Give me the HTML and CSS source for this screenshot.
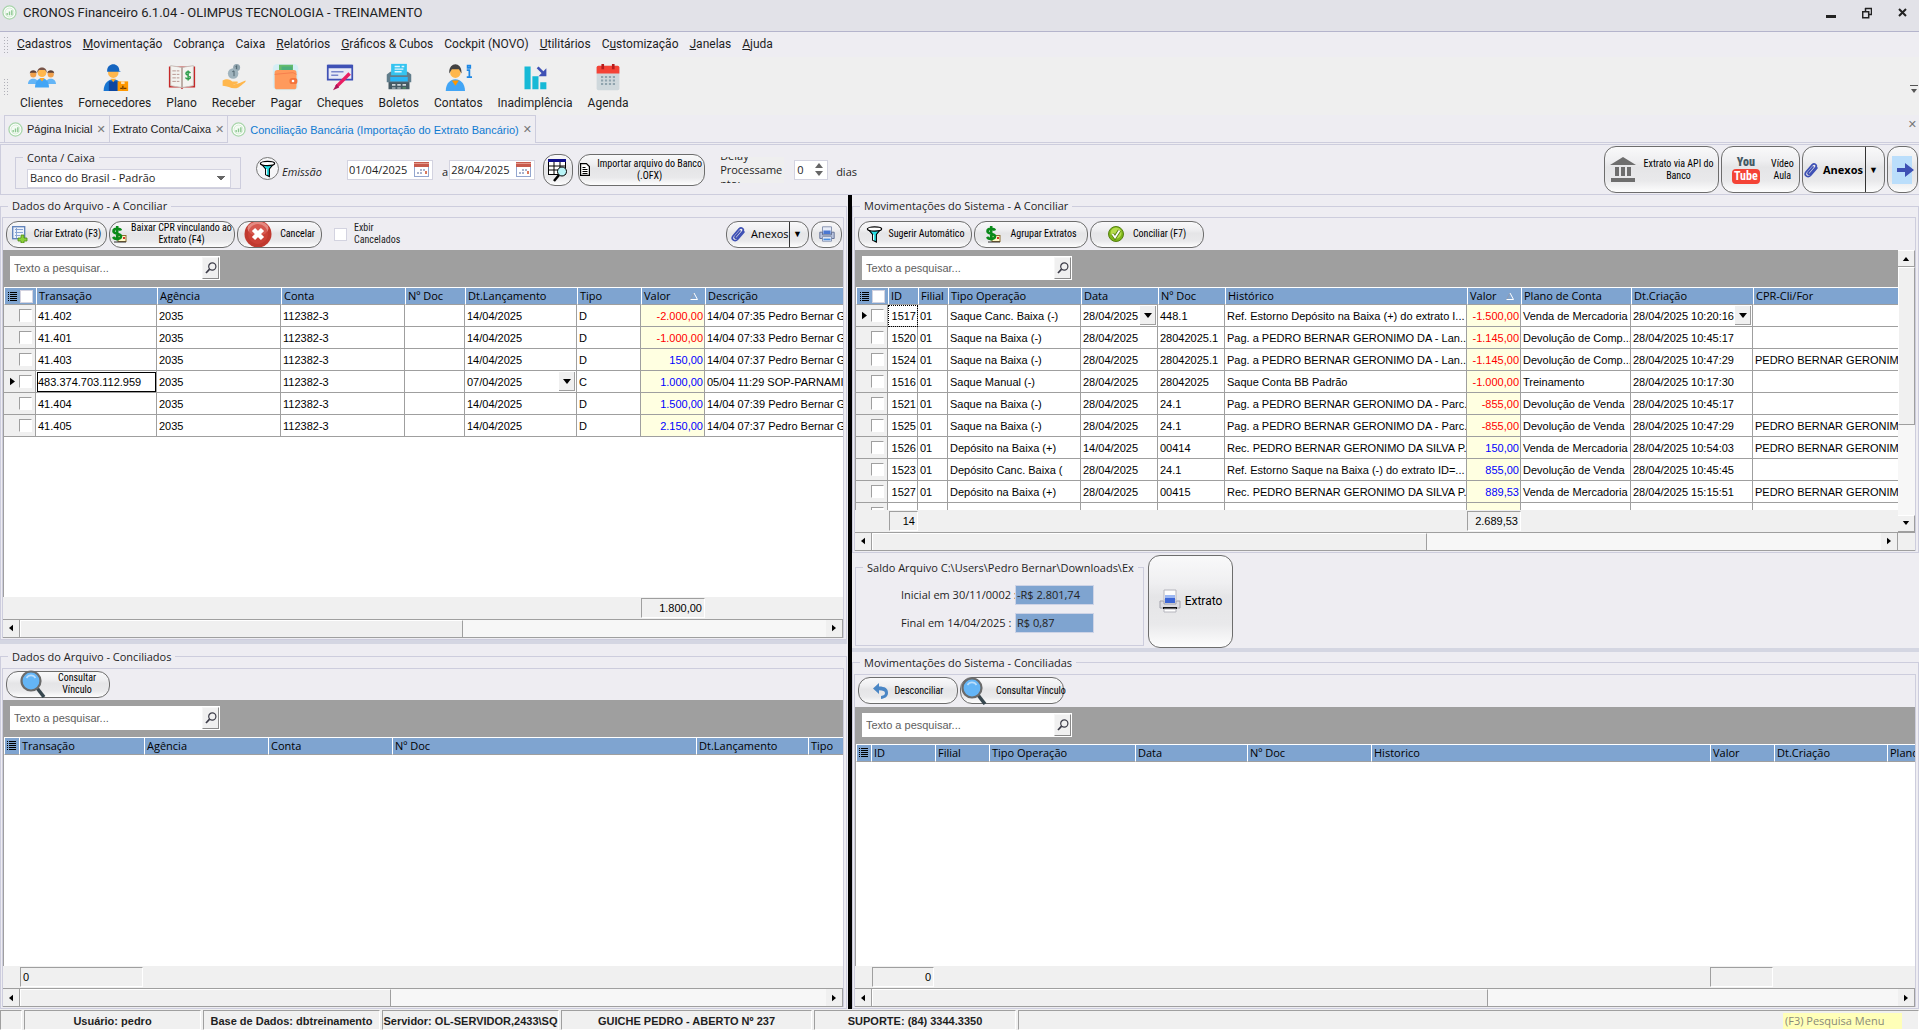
FILE: index.html
```html
<!DOCTYPE html>
<html lang="pt-BR">
<head>
    <meta charset="UTF-8">
    <meta name="viewport" content="width=device-width, initial-scale=1.0">
    <title>CRONOS Financeiro 6.1.04 - OLIMPUS TECNOLOGIA - TREINAMENTO</title>
    <link rel="stylesheet" href="styles.css">
</head>
<body>

    <!-- símbolos reutilizados -->
    <svg class="symbols" aria-hidden="true">
        <symbol id="i-logo" viewBox="0 0 16 16"><circle cx="8" cy="8" r="7" fill="#fff" stroke="#a9d6ab" stroke-width="1.4"/><circle cx="8" cy="8" r="4.8" fill="#f4fbf4" stroke="#c9e6ca" stroke-width=".8"/><path d="M5.500 11V8.500M8 11V7M10.500 11V5.500" stroke="#8cc790" stroke-width="1.500"/></symbol>
        <symbol id="i-cal" viewBox="0 0 15 15"><rect x=".5" y=".5" width="14" height="14" fill="#fff" stroke="#93a6cf"/><rect width="15" height="5" fill="#c75a4c"/><rect y="1" width="15" height="1" fill="#e39a8e"/><path d="M6 7h2v2H6zM9 7h2v2H9zM3 10h2v2H3zM6 10h2v2H6z" fill="#a9b3cd"/><path d="M11 9h2v3h-2z" fill="#d9795e"/></symbol>
        <symbol id="i-lupa" viewBox="0 0 12 12"><circle cx="7.300" cy="4.500" r="3.600" fill="none" stroke="#3c3c48" stroke-width="1.200"/><path d="M4.600 7.200L1 11" stroke="#3c3c48" stroke-width="1.700"/></symbol>
        <symbol id="i-lupa-azul" viewBox="0 0 26 28"><path d="M17 18l7 9" stroke="#37474f" stroke-width="3.500"/><circle cx="11" cy="11" r="9.500" fill="#64b5f6" stroke="#6b6b6b" stroke-width="2.200"/><path d="M6.500 8c2-3.500 7-3.500 9 0" fill="none" stroke="#bbdefb" stroke-width="1.600"/></symbol>
        <symbol id="i-funil" viewBox="0 0 18 18"><path d="M2 3l5 6v6l4 2V9l5-6z" fill="#27e0e6" stroke="#000" stroke-width="1.200"/><ellipse cx="9" cy="3.200" rx="7.500" ry="2.200" fill="#fff" stroke="#000" stroke-width="1.300"/><path d="M8 9v6" stroke="#fff"/></symbol>
        <symbol id="i-cifra" viewBox="0 0 16 17"><rect x="7" y="9.500" width="8" height="6" fill="#fff9c8" stroke="#8a6d2f"/><path d="M10 4.500C9 2.500 2.500 2 2.500 5.300c0 3.200 7.500 1.500 7.500 5 0 3.400-6.500 3.200-8 .7M6.200 0v14.500" fill="none" stroke="#0a8a1a" stroke-width="2.600"/><path d="M3 16h12" stroke="#333"/><path d="M12 11h2v2h-2z" fill="#d0342c"/></symbol>
        <symbol id="i-clipe" viewBox="0 0 16 16"><path d="M14 6l-6.500 7.500c-2.400 2.500-6.800.2-4.700-3.300l6.500-7.500c2-2 5.200.2 3.500 2.700L7 12c-1.100 1.100-2.700-.2-1.800-1.400L10 5" fill="none" stroke="#3f51b5" stroke-width="1.700" stroke-linecap="round"/></symbol>
        <symbol id="i-impressora" viewBox="0 0 20 20"><path d="M5 2h10v8H5z" fill="#e8edf8" stroke="#7f8cab"/><path d="M2 8h3v3h10V8h3v7H2z" fill="#b9c4de" stroke="#5d6c92"/><path d="M6 6h8v4H6z" fill="#4b78d2"/><path d="M5 13h10v5H5z" fill="#f4f7ff" stroke="#7f8cab"/><path d="M6 16h8" stroke="#4b8fe0" stroke-width="2"/></symbol>
        <symbol id="i-lista" viewBox="0 0 9 9"><path d="M0 .5h1M2 .5h7M0 2.500h1M2 2.500h7M0 4.500h1M2 4.500h7M0 6.500h1M2 6.500h7M0 8.500h1M2 8.500h7" stroke="#000"/></symbol>
        <symbol id="i-ordem" viewBox="0 0 8 8"><path d="M.5 7.500L4 1" stroke="#8f9bb0" fill="none"/><path d="M4 1l3.500 6.500h-7" stroke="#fff" fill="none"/></symbol>
        <symbol id="i-ponta" viewBox="0 0 6 9"><path d="M0 0l6 4.500L0 9z"/></symbol>
        <symbol id="i-esq" viewBox="0 0 5 8"><path d="M5 0L0 4l5 4z"/></symbol>
        <symbol id="i-dir" viewBox="0 0 5 8"><path d="M0 0l5 4-5 4z"/></symbol>
        <symbol id="i-cima" viewBox="0 0 8 5"><path d="M0 5l4-5 4 5z"/></symbol>
        <symbol id="i-baixo" viewBox="0 0 8 5"><path d="M0 0l4 5 4-5z"/></symbol>
    </svg>

    <!-- barra de título -->
    <header class="titlebar">
        <svg class="logo"><use href="#i-logo"/></svg>
        <h1>CRONOS Financeiro 6.1.04 - OLIMPUS TECNOLOGIA - TREINAMENTO</h1>
        <div class="window-buttons">
            <button aria-label="Minimizar"><svg width="10" height="12"><path d="M0 8h10v3H0z" fill="#222"/></svg></button>
            <button aria-label="Restaurar"><svg width="10" height="12"><path d="M3 1.500h6.500v6H7M3.500 1v3" fill="none" stroke="#222" stroke-width="1.500"/><path d="M.7 4.700h6v6h-6z" fill="none" stroke="#222" stroke-width="1.500"/></svg></button>
            <button aria-label="Fechar"><svg width="10" height="12"><path d="M1 2l7 7M8 2L1 9" stroke="#222" stroke-width="2"/></svg></button>
        </div>
    </header>

    <nav class="menubar">
        <span class="grip"></span>
        <a href="#"><u>C</u>adastros</a>
        <a href="#"><u>M</u>ovimentação</a>
        <a href="#">Cobrança</a>
        <a href="#">Caixa</a>
        <a href="#"><u>R</u>elatórios</a>
        <a href="#"><u>G</u>ráficos &amp; Cubos</a>
        <a href="#">Cockpit (NOVO)</a>
        <a href="#"><u>U</u>tilitários</a>
        <a href="#">C<u>u</u>stomização</a>
        <a href="#"><u>J</u>anelas</a>
        <a href="#"><u>A</u>juda</a>
    </nav>

    <div class="toolbar">
        <span class="grip"></span>
        <button>
            <svg viewBox="0 0 32 32"><circle cx="6" cy="13" r="3.500" fill="#f0a04b"/><path d="M2 12c0-5 8-5 8 0l-1-1H3z" fill="#5d4037"/><circle cx="26" cy="13" r="3.500" fill="#f0a04b"/><path d="M22 12c0-5 8-5 8 0l-1-1h-6z" fill="#5d4037"/><path d="M0 24c0-8 12-8 12 0zM20 24c0-8 12-8 12 0z" fill="#64b5f6"/><circle cx="16" cy="11" r="5" fill="#ffb74d"/><path d="M10.500 11c0-8 11-8 11 0l-2-3h-7z" fill="#795548"/><path d="M8 28c0-14 16-14 16 0z" fill="#42a5f5"/><path d="M13 17h6l-3 4z" fill="#ffa726"/></svg>
            <span>Clientes</span>
        </button>
        <button>
            <svg viewBox="0 0 32 32"><circle cx="14" cy="11" r="6" fill="#ffb74d"/><path d="M7 9c0-10 14-10 14 0l2 1H7z" fill="#1565c0"/><path d="M3 32c0-18 22-18 22 0z" fill="#1976d2"/><path d="M9 21h10v11H9z" fill="#0d47a1"/><path d="M11 18h6l-3 4z" fill="#ffa726"/><path d="M19 21h12v11H19z" fill="#ff9800"/><path d="M23 21h4v3h-4z" fill="#ffe0b2"/><path d="M22 29h2M26 29h3M25 26v4" stroke="#6d3b00" stroke-width="1.500"/></svg>
            <span>Fornecedores</span>
        </button>
        <button>
            <svg viewBox="0 0 32 32"><path d="M1 4h30v24H18l-2 2-2-2H1z" fill="#c62828"/><path d="M3 3l13 2v23L3 26zM29 3L16 5v23l13-2z" fill="#f3f3f0" stroke="#c5beb8"/><path d="M16 5v23" stroke="#a1887f"/><path d="M5 9h8M5 13h8M5 17h8M5 21h8" stroke="#b08a85" stroke-dasharray="4 1"/><path d="M25.500 11.500c-1-2-5-2-5 .5s5 1.800 5 4.300-4.500 2.500-5.500.2M23 8.500v11.500" fill="none" stroke="#2e9e4b" stroke-width="1.700"/></svg>
            <span>Plano</span>
        </button>
        <button>
            <svg viewBox="0 0 32 32"><circle cx="19" cy="5" r="4" fill="#90a4ae"/><circle cx="15" cy="12" r="6" fill="#9fb3bd"/><path d="M14 10l2-1v6M18 4l1-1v4" fill="none" stroke="#455a64"/><path d="M3 20c5-3 9-1 11 1h6c1 2-1 3-5 3 4 1 9-2 14-4 2 1-4 5-8 8-7 3-11-2-18-2z" fill="#ffb74d"/></svg>
            <span>Receber</span>
        </button>
        <button>
            <svg viewBox="0 0 32 32"><rect x="1" y="1" width="29" height="30" rx="5" fill="#d5eef5"/><path d="M8 2h16v11H8z" fill="#66bb6a"/><path d="M11 4h12v7H11z" fill="#4caf7a"/><rect x="3" y="8" width="25" height="22" rx="3" fill="#ff9a5c"/><path d="M3 13l21-2 4 2" stroke="#f57c4b" fill="none"/><rect x="20" y="17" width="9" height="7" rx="3" fill="#f4743b"/><circle cx="24" cy="20.500" r="1.500" fill="#fff"/></svg>
            <span>Pagar</span>
        </button>
        <button>
            <svg viewBox="0 0 32 32"><rect x="2" y="3" width="28" height="16" fill="#e8eaf6" stroke="#3f51b5" stroke-width="2"/><path d="M2 4h28" stroke="#3f51b5" stroke-width="4"/><path d="M6 10h14M6 14h8" stroke="#7986cb" stroke-width="1.500"/><path d="M27 12L12 27" stroke="#e91e63" stroke-width="4"/><path d="M12 24l3 4-7 3z" fill="#ad1457"/></svg>
            <span>Cheques</span>
        </button>
        <button>
            <svg viewBox="0 0 32 32"><path d="M4 14h24v16H4z" fill="#455a64"/><path d="M2 13l4-3h20l4 3v9H2z" fill="#607d8b"/><path d="M7 1h18v13H7z" fill="#35c4f0"/><path d="M11 4h6M11 7h10M11 10h8M19 4h3" stroke="#e1f5fe" stroke-width="1.500"/><path d="M6 16h20v5H6z" fill="#29b6f6"/><path d="M8 24h4v2H8zM14 24h4v2h-4zM20 24h4v2h-4zM8 28h4v1H8zM14 28h4v1h-4z" fill="#cfd8dc"/><path d="M20 28h4v1h-4z" fill="#66bb6a"/></svg>
            <span>Boletos</span>
        </button>
        <button>
            <svg viewBox="0 0 32 32"><circle cx="13" cy="11" r="6" fill="#ffb74d"/><path d="M6 12c-1-14 15-14 14 0l-3-5H9z" fill="#424242"/><path d="M2 32c0-18 22-18 22 0z" fill="#42a5f5"/><path d="M9 20h8l-4 6z" fill="#ff9800"/><path d="M27 3h3v2.500h-3zM26 8h3v8M26 16h6" fill="none" stroke="#1e88e5" stroke-width="2"/></svg>
            <span>Contatos</span>
        </button>
        <button>
            <svg viewBox="0 0 32 32"><path d="M4 4h7v26H4zM13 15h7v15h-7zM22 22h7v8h-7z" fill="#16b9d6"/><path d="M19 5l8 8" stroke="#3f51b5" stroke-width="3"/><path d="M29 6v9h-9z" fill="#3f51b5"/></svg>
            <span>Inadimplência</span>
        </button>
        <button>
            <svg viewBox="0 0 32 32"><rect x="3" y="3" width="26" height="28" rx="2" fill="#cfd8dc"/><path d="M3 12V5q0-2 2-2h22q2 0 2 2v7z" fill="#f44336"/><path d="M10 1v6M22 1v6" stroke="#b71c1c" stroke-width="3"/><path d="M8 16h16M8 20h16M8 24h16" stroke="#90a4ae" stroke-width="2.500" stroke-dasharray="2.500 2"/></svg>
            <span>Agenda</span>
        </button>
        <svg class="overflow" width="8" height="10"><path d="M0 .5h8" stroke="#555"/><path d="M1 4l3 4 3-4z" fill="#555"/></svg>
    </div>

    <div class="tabs">
        <div class="tab"><svg class="logo"><use href="#i-logo"/></svg><a href="#">Página Inicial</a><button aria-label="Fechar">✕</button></div>
        <div class="tab tab-plain"><a href="#">Extrato Conta/Caixa</a><button aria-label="Fechar">✕</button></div>
        <div class="tab tab-active"><svg class="logo"><use href="#i-logo"/></svg><a href="#">Conciliação Bancária (Importação do Extrato Bancário)</a><button aria-label="Fechar">✕</button></div>
        <button class="close-all" aria-label="Fechar tudo">✕</button>
    </div>

    <!-- filtros -->
    <form class="filters">
        <fieldset class="conta">
            <legend><label for="conta">Conta / Caixa</label></legend>
            <select id="conta"><option>Banco do Brasil - Padrão</option></select>
        </fieldset>
        <button type="button" class="round" aria-label="Filtrar"><svg width="17" height="18"><use href="#i-funil"/></svg></button>
        <label for="de" class="emissao">Emissão</label>
        <span class="date"><input type="text" id="de" value="01/04/2025"><svg><use href="#i-cal"/></svg></span>
        <label for="ate" class="ate">a</label>
        <span class="date"><input type="text" id="ate" value="28/04/2025"><svg><use href="#i-cal"/></svg></span>
        <button type="button" class="btn buscar" aria-label="Buscar"><svg width="22" height="24" viewBox="0 0 22 24"><rect x="1.500" y="1.500" width="17" height="15" fill="#fff" stroke="#000"/><path d="M1 1h18v3H1z" fill="#10108a"/><path d="M1 8h18M1 12h18M7 4v13M13 4v13" stroke="#000"/><path d="M12 17l-5 6" stroke="#000" stroke-width="2.500"/><circle cx="15" cy="13.500" r="4.500" fill="#b8f4f7" stroke="#000"/></svg></button>
        <button type="button" class="btn importar"><svg width="10" height="13" viewBox="0 0 10 13"><path d="M.6.600h5.800l3 3v8.800H.6z" fill="#fff" stroke="#000" stroke-width="1.200"/><path d="M2.500 4.500h3M2.500 6.500h5M2.500 8.500h5M2.500 10.500h5" stroke="#000"/></svg><span>Importar arquivo do Banco (.OFX)</span></button>
        <label for="delay" class="delay"><span>Delay Processame<wbr>nto:</span></label>
        <span class="spin"><input type="text" id="delay" value="0"><span><svg width="8" height="5"><use href="#i-cima"/></svg><svg width="8" height="5"><use href="#i-baixo"/></svg></span></span>
        <span class="dias">dias</span>

        <div class="right-buttons">
            <button type="button" class="btn api"><svg width="28" height="26" viewBox="0 0 28 26"><path d="M14 0l13 8H1zM6 10h4v9H6zM12 10h4v9h-4zM18 10h4v9h-4zM2 21h24v4H2z" fill="#6e6e6e"/></svg><span>Extrato via API do Banco</span></button>
            <button type="button" class="btn video"><span class="yt"><b>You</b><i>Tube</i></span><span>Vídeo Aula</span></button>
            <span class="btn split split-big"><button type="button"><svg width="16" height="18"><use href="#i-clipe"/></svg><span>Anexos</span></button><button type="button" aria-label="Mais">▼</button></span>
            <button type="button" class="btn sair" aria-label="Sair"><svg width="22" height="30" viewBox="0 0 22 30"><path d="M0 1h20v28H0z" fill="#bbdefb"/><path d="M5 13h8V8l9 7-9 7v-5H5z" fill="#3f51b5"/></svg></button>
        </div>
    </form>

    <main class="panes">

        <!-- lado esquerdo: arquivo -->
        <section class="side">
            <fieldset class="pane pane-a">
                <legend>Dados do Arquivo - A Conciliar</legend>
                <div class="box">
                    <div class="actions">
                        <button class="btn criar"><svg width="16" height="17" viewBox="0 0 16 17"><rect x=".7" y=".7" width="12" height="12" fill="#eef3fb" stroke="#5c7fb8" stroke-width="1.300"/><path d="M3 3.500h8M3 6.500h8M3 9.500h5M4.500 2v10" stroke="#89a5d3"/><path d="M9 9h3v3h3v3h-3v2H9v-2H6v-3h3z" fill="#8bd13a" stroke="#4b8a14" stroke-width=".8"/></svg><span>Criar Extrato (F3)</span></button>
                        <button class="btn baixar"><svg width="16" height="17"><use href="#i-cifra"/></svg><span>Baixar CPR vinculando ao Extrato (F4)</span></button>
                        <button class="btn cancelar"><svg width="28" height="28" viewBox="0 0 28 28"><circle cx="14" cy="14" r="13.500" fill="#c0392f"/><ellipse cx="14" cy="8.500" rx="10.500" ry="7" fill="#e58a82"/><circle cx="14" cy="14" r="10" fill="#d0453a" opacity=".7"/><path d="M9.500 9.500l9 9M18.500 9.500l-9 9" stroke="#fff" stroke-width="4.500"/></svg><span>Cancelar</span></button>
                        <label class="exibir"><input type="checkbox"><span>Exbir Cancelados</span></label>
                        <span class="btn split push"><button><svg width="16" height="18"><use href="#i-clipe"/></svg><span>Anexos</span></button><button aria-label="Mais">▼</button></span>
                        <button class="btn imprimir" aria-label="Imprimir"><svg width="18" height="18"><use href="#i-impressora"/></svg></button>
                    </div>
                    <div class="searchbar"><div class="search"><input type="text" placeholder="Texto a pesquisar..." aria-label="Pesquisar"><button aria-label="Pesquisar"><svg width="12" height="12"><use href="#i-lupa"/></svg></button></div></div>
                    <div class="grid-area">
                        <table class="grid grid-arquivo">
                            <colgroup><col><col><col><col><col><col><col><col><col></colgroup>
                            <thead>
                                <tr><th class="ind"><span><svg width="9" height="9"><use href="#i-lista"/></svg><input type="checkbox" aria-label="Todos"></span></th><th>Transação</th><th>Agência</th><th>Conta</th><th>Nº Doc</th><th>Dt.Lançamento</th><th>Tipo</th><th class="ord">Valor<svg width="8" height="8"><use href="#i-ordem"/></svg></th><th>Descrição</th></tr>
                            </thead>
                            <tbody>
                                <tr><td class="ind"><span><input type="checkbox" aria-label="41.402"></span></td><td>41.402</td><td>2035</td><td>112382-3</td><td></td><td>14/04/2025</td><td>D</td><td class="val neg">-2.000,00</td><td>14/04 07:35 Pedro Bernar Geronimo</td></tr>
                                <tr><td class="ind"><span><input type="checkbox" aria-label="41.401"></span></td><td>41.401</td><td>2035</td><td>112382-3</td><td></td><td>14/04/2025</td><td>D</td><td class="val neg">-1.000,00</td><td>14/04 07:33 Pedro Bernar Geronimo</td></tr>
                                <tr><td class="ind"><span><input type="checkbox" aria-label="41.403"></span></td><td>41.403</td><td>2035</td><td>112382-3</td><td></td><td>14/04/2025</td><td>D</td><td class="val">150,00</td><td>14/04 07:37 Pedro Bernar Geronimo</td></tr>
                                <tr><td class="ind"><span><svg width="5" height="9"><use href="#i-ponta"/></svg><input type="checkbox" aria-label="483.374.703.112.959"></span></td><td class="focus">483.374.703.112.959</td><td>2035</td><td>112382-3</td><td></td><td class="drop"><span>07/04/2025<button aria-label="Abrir"><svg width="10" height="5"><use href="#i-baixo"/></svg></button></span></td><td>C</td><td class="val">1.000,00</td><td>05/04 11:29 SOP-PARNAMIRIM</td></tr>
                                <tr><td class="ind"><span><input type="checkbox" aria-label="41.404"></span></td><td>41.404</td><td>2035</td><td>112382-3</td><td></td><td>14/04/2025</td><td>D</td><td class="val">1.500,00</td><td>14/04 07:39 Pedro Bernar Geronimo</td></tr>
                                <tr><td class="ind"><span><input type="checkbox" aria-label="41.405"></span></td><td>41.405</td><td>2035</td><td>112382-3</td><td></td><td>14/04/2025</td><td>D</td><td class="val">2.150,00</td><td>14/04 07:37 Pedro Bernar Geronimo</td></tr>
                            </tbody>
                        </table>
                    </div>
                    <div class="totals totals-arquivo"><output>1.800,00</output></div>
                    <div class="hscroll"><button aria-label="Esquerda"><svg width="4" height="8"><use href="#i-esq"/></svg></button><span class="track"><span class="thumb thumb-55"></span></span><button aria-label="Direita"><svg width="4" height="8"><use href="#i-dir"/></svg></button></div>
                </div>
            </fieldset>

            <div class="splitter"></div>

            <fieldset class="pane pane-b">
                <legend>Dados do Arquivo - Conciliados</legend>
                <div class="box">
                    <div class="actions">
                        <button class="btn consultar"><svg width="26" height="28"><use href="#i-lupa-azul"/></svg><span>Consultar Vínculo</span></button>
                    </div>
                    <div class="searchbar"><div class="search"><input type="text" placeholder="Texto a pesquisar..." aria-label="Pesquisar"><button aria-label="Pesquisar"><svg width="12" height="12"><use href="#i-lupa"/></svg></button></div></div>
                    <div class="grid-area">
                        <table class="grid grid-arquivo-conc">
                            <colgroup><col><col><col><col><col><col><col></colgroup>
                            <thead>
                                <tr><th class="ind"><span><svg width="9" height="9"><use href="#i-lista"/></svg></span></th><th>Transação</th><th>Agência</th><th>Conta</th><th>Nº Doc</th><th>Dt.Lançamento</th><th>Tipo</th></tr>
                            </thead>
                        </table>
                    </div>
                    <div class="totals totals-arquivo-conc"><output>0</output></div>
                    <div class="hscroll"><button aria-label="Esquerda"><svg width="4" height="8"><use href="#i-esq"/></svg></button><span class="track"><span class="thumb thumb-46"></span></span><button aria-label="Direita"><svg width="4" height="8"><use href="#i-dir"/></svg></button></div>
                </div>
            </fieldset>
        </section>

        <!-- lado direito: sistema -->
        <section class="side side-right">
            <fieldset class="pane">
                <legend>Movimentações do Sistema - A Conciliar</legend>
                <div class="box">
                    <div class="actions">
                        <button class="btn acao"><svg width="17" height="17"><use href="#i-funil"/></svg><span>Sugerir Automático</span></button>
                        <button class="btn acao"><svg width="16" height="17"><use href="#i-cifra"/></svg><span>Agrupar Extratos</span></button>
                        <button class="btn acao"><svg width="16" height="16" viewBox="0 0 16 16"><circle cx="8" cy="8" r="7.500" fill="#7cb518" stroke="#557f12"/><circle cx="8" cy="7" r="5.500" fill="#b6dc4e"/><path d="M4.500 8l2.500 3.500 4.500-7" fill="none" stroke="#557f12" stroke-width="3.500"/><path d="M4.500 8l2.500 3.500 4.500-7" fill="none" stroke="#fff" stroke-width="1.700"/></svg><span>Conciliar (F7)</span></button>
                    </div>
                    <div class="with-vscroll">
                        <div class="grid-col">
                            <div class="searchbar"><div class="search"><input type="text" placeholder="Texto a pesquisar..." aria-label="Pesquisar"><button aria-label="Pesquisar"><svg width="12" height="12"><use href="#i-lupa"/></svg></button></div></div>
                            <div class="grid-area">
                                <table class="grid grid-sistema">
                                    <colgroup><col><col><col><col><col><col><col><col><col><col><col></colgroup>
                                    <thead>
                                        <tr><th class="ind"><span><svg width="9" height="9"><use href="#i-lista"/></svg><input type="checkbox" aria-label="Todos"></span></th><th>ID</th><th>Filial</th><th>Tipo Operação</th><th>Data</th><th>Nº Doc</th><th>Histórico</th><th class="ord">Valor<svg width="8" height="8"><use href="#i-ordem"/></svg></th><th>Plano de Conta</th><th>Dt.Criação</th><th>CPR-Cli/For</th></tr>
                                    </thead>
                                    <tbody>
                                        <tr><td class="ind"><span><svg width="5" height="9"><use href="#i-ponta"/></svg><input type="checkbox" aria-label="1517"></span></td><td class="id dotted">1517</td><td>01</td><td>Saque Canc. Baixa (-)</td><td class="drop"><span>28/04/2025<button aria-label="Abrir"><svg width="10" height="5"><use href="#i-baixo"/></svg></button></span></td><td>448.1</td><td>Ref. Estorno Depósito na Baixa (+) do extrato I...</td><td class="val neg">-1.500,00</td><td>Venda de Mercadoria</td><td class="drop"><span>28/04/2025 10:20:16<button aria-label="Abrir"><svg width="10" height="5"><use href="#i-baixo"/></svg></button></span></td><td></td></tr>
                                        <tr><td class="ind"><span><input type="checkbox" aria-label="1520"></span></td><td class="id">1520</td><td>01</td><td>Saque na Baixa (-)</td><td>28/04/2025</td><td>28042025.1</td><td>Pag. a PEDRO BERNAR GERONIMO DA - Lan...</td><td class="val neg">-1.145,00</td><td>Devolução de Comp...</td><td>28/04/2025 10:45:17</td><td></td></tr>
                                        <tr><td class="ind"><span><input type="checkbox" aria-label="1524"></span></td><td class="id">1524</td><td>01</td><td>Saque na Baixa (-)</td><td>28/04/2025</td><td>28042025.1</td><td>Pag. a PEDRO BERNAR GERONIMO DA - Lan...</td><td class="val neg">-1.145,00</td><td>Devolução de Comp...</td><td>28/04/2025 10:47:29</td><td>PEDRO BERNAR GERONIMO DA SILVA</td></tr>
                                        <tr><td class="ind"><span><input type="checkbox" aria-label="1516"></span></td><td class="id">1516</td><td>01</td><td>Saque Manual (-)</td><td>28/04/2025</td><td>28042025</td><td>Saque Conta BB Padrão</td><td class="val neg">-1.000,00</td><td>Treinamento</td><td>28/04/2025 10:17:30</td><td></td></tr>
                                        <tr><td class="ind"><span><input type="checkbox" aria-label="1521"></span></td><td class="id">1521</td><td>01</td><td>Saque na Baixa (-)</td><td>28/04/2025</td><td>24.1</td><td>Pag. a PEDRO BERNAR GERONIMO DA - Parc...</td><td class="val neg">-855,00</td><td>Devolução de Venda</td><td>28/04/2025 10:45:17</td><td></td></tr>
                                        <tr><td class="ind"><span><input type="checkbox" aria-label="1525"></span></td><td class="id">1525</td><td>01</td><td>Saque na Baixa (-)</td><td>28/04/2025</td><td>24.1</td><td>Pag. a PEDRO BERNAR GERONIMO DA - Parc...</td><td class="val neg">-855,00</td><td>Devolução de Venda</td><td>28/04/2025 10:47:29</td><td>PEDRO BERNAR GERONIMO DA SILVA</td></tr>
                                        <tr><td class="ind"><span><input type="checkbox" aria-label="1526"></span></td><td class="id">1526</td><td>01</td><td>Depósito na Baixa (+)</td><td>14/04/2025</td><td>00414</td><td>Rec. PEDRO BERNAR GERONIMO DA SILVA P...</td><td class="val">150,00</td><td>Venda de Mercadoria</td><td>28/04/2025 10:54:03</td><td>PEDRO BERNAR GERONIMO DA SILVA</td></tr>
                                        <tr><td class="ind"><span><input type="checkbox" aria-label="1523"></span></td><td class="id">1523</td><td>01</td><td>Depósito Canc. Baixa (</td><td>28/04/2025</td><td>24.1</td><td>Ref. Estorno Saque na Baixa (-) do extrato ID=...</td><td class="val">855,00</td><td>Devolução de Venda</td><td>28/04/2025 10:45:45</td><td></td></tr>
                                        <tr><td class="ind"><span><input type="checkbox" aria-label="1527"></span></td><td class="id">1527</td><td>01</td><td>Depósito na Baixa (+)</td><td>28/04/2025</td><td>00415</td><td>Rec. PEDRO BERNAR GERONIMO DA SILVA P...</td><td class="val">889,53</td><td>Venda de Mercadoria</td><td>28/04/2025 15:15:51</td><td>PEDRO BERNAR GERONIMO DA SILVA</td></tr>
                                        <tr><td class="ind"><span><input type="checkbox" aria-label="Próximo"></span></td><td></td><td></td><td></td><td></td><td></td><td></td><td class="val"></td><td></td><td></td><td></td></tr>
                                    </tbody>
                                </table>
                            </div>
                            <div class="totals totals-sistema"><output>14</output><output>2.689,53</output></div>
                        </div>
                        <div class="vscroll"><button aria-label="Subir"><svg width="8" height="4"><use href="#i-cima"/></svg></button><span class="track"><span class="thumb"></span></span><button aria-label="Descer"><svg width="8" height="4"><use href="#i-baixo"/></svg></button></div>
                    </div>
                    <div class="hscroll has-corner"><button aria-label="Esquerda"><svg width="4" height="8"><use href="#i-esq"/></svg></button><span class="track"><span class="thumb thumb-55"></span></span><button aria-label="Direita"><svg width="4" height="8"><use href="#i-dir"/></svg></button></div>
                </div>
            </fieldset>

            <div class="saldo">
                <fieldset class="saldo-box">
                    <legend>Saldo Arquivo C:\Users\Pedro Bernar\Downloads\Ex</legend>
                    <div class="saldo-row"><label for="inicial">Inicial em 30/11/0002 :</label><input type="text" id="inicial" value="-R$ 2.801,74" readonly></div>
                    <div class="saldo-row"><label for="final">Final em 14/04/2025 :</label><input type="text" id="final" value="R$ 0,87" readonly></div>
                </fieldset>
                <button class="btn extrato"><svg width="22" height="24" viewBox="0 0 22 24"><path d="M5 1h12v10H5z" fill="#fdfdfd" stroke="#b5b5bd"/><path d="M6 6h10v8H6z" fill="#3c66d6"/><path d="M6 6h10v3H6z" fill="#9db8f2"/><path d="M1 12h4v3h12v-3h4v7H1z" fill="#dcdce2" stroke="#a0a0aa"/><path d="M4 18h14v2H4z" fill="#111"/><path d="M5 20h12v3H5z" fill="#fff" stroke="#b5b5bd"/></svg><span>Extrato</span></button>
            </div>

            <div class="splitter"></div>

            <fieldset class="pane">
                <legend>Movimentações do Sistema - Conciliadas</legend>
                <div class="box">
                    <div class="actions">
                        <button class="btn desconciliar"><svg width="16" height="16" viewBox="0 0 16 16"><path d="M0 5.500L6 0v3.500c6 0 9 2 9 6.500 0 3.500-3 5.500-7 6v-3c3-.5 4-1.500 4-3 0-2-2-2.800-6-2.800V11z" fill="#4a86c5"/></svg><span>Desconciliar</span></button>
                        <button class="btn consultar consultar-linha"><svg width="26" height="28"><use href="#i-lupa-azul"/></svg><span>Consultar Vínculo</span></button>
                    </div>
                    <div class="searchbar"><div class="search"><input type="text" placeholder="Texto a pesquisar..." aria-label="Pesquisar"><button aria-label="Pesquisar"><svg width="12" height="12"><use href="#i-lupa"/></svg></button></div></div>
                    <div class="grid-area">
                        <table class="grid grid-sistema-conc">
                            <colgroup><col><col><col><col><col><col><col><col><col><col></colgroup>
                            <thead>
                                <tr><th class="ind"><span><svg width="9" height="9"><use href="#i-lista"/></svg></span></th><th>ID</th><th>Filial</th><th>Tipo Operação</th><th>Data</th><th>Nº Doc</th><th>Historico</th><th>Valor</th><th>Dt.Criação</th><th>Plano de Conta</th></tr>
                            </thead>
                        </table>
                    </div>
                    <div class="totals totals-sistema-conc"><output>0</output><output></output></div>
                    <div class="hscroll"><button aria-label="Esquerda"><svg width="4" height="8"><use href="#i-esq"/></svg></button><span class="track"><span class="thumb thumb-60"></span></span><button aria-label="Direita"><svg width="4" height="8"><use href="#i-dir"/></svg></button></div>
                </div>
            </fieldset>
        </section>
    </main>

    <footer class="statusbar">
        <span></span>
        <span>Usuário: pedro</span>
        <span>Base de Dados: dbtreinamento</span>
        <span>Servidor: OL-SERVIDOR,2433\SQ</span>
        <span>GUICHE PEDRO - ABERTO Nº 237</span>
        <span>SUPORTE: (84) 3344.3350</span>
        <span class="last"><input type="text" placeholder="(F3) Pesquisa Menu" aria-label="Pesquisa Menu"></span>
    </footer>

</body>
</html>
```
FILE: styles.css
```css
* {
    box-sizing: border-box;
}

body {
    margin: 0;
    height: 100vh;
    display: flex;
    flex-direction: column;
    overflow: hidden;
    background: #eeedf2;
    color: #1e1e1e;
    font-family: "Open Sans", sans-serif;
    font-size: 11px;
    line-height: 14px;
}

button, input, select {
    font: inherit;
    color: inherit;
    margin: 0;
    padding: 0;
    border: none;
    border-radius: 0;
    background: none;
}

fieldset {
    margin: 0;
    padding: 0;
    min-width: 0;
    border: 1px solid #cdcddd;
}

legend {
    padding: 0 4px;
}

a {
    color: inherit;
    text-decoration: none;
}

svg {
    flex: none;
}

.symbols {
    position: absolute;
    width: 0;
    height: 0;
}

.logo {
    width: 15px;
    height: 15px;
}

/* título */
.titlebar {
    display: flex;
    align-items: center;
    gap: 6px;
    height: 32px;
    padding: 0 11px 6px 2px;
    background: #e2e2e8;
    border-bottom: 1px solid #b4b4cc;
}

.titlebar h1 {
    margin: 0;
    flex: 1;
    font: 13px Roboto, sans-serif;
}

.window-buttons {
    display: flex;
    gap: 26px;
}

.window-buttons button {
    display: flex;
}

/* menu */
.menubar, .toolbar {
    display: flex;
    font: 12px/14px Roboto, sans-serif;
    padding-left: 3px;
}

.menubar {
    height: 25px;
    padding-bottom: 1px;
    align-items: center;
    gap: 11px;
}

.grip {
    width: 5px;
    height: 17px;
    margin-right: -2px;
    background: radial-gradient(circle, #b0b0b8 1px, transparent 1px) 0 0 / 3px 3px;
}

.toolbar {
    height: 58px;
    align-items: center;
    background: #efefef;
}

.toolbar button {
    display: flex;
    flex-direction: column;
    align-items: center;
    gap: 5px;
    padding: 0 8px 0 7px;
}

.toolbar .grip + button {
    margin-left: 7px;
}

.toolbar button svg {
    width: 28px;
    height: 28px;
}

.toolbar .overflow {
    margin: 8px 1px 0 auto;
}

/* abas */
.tabs {
    display: flex;
    height: 28px;
    padding-left: 4px;
    border-bottom: 1px solid #cdcddd;
    font: 11px/14px "Liberation Sans", Arial, sans-serif;
}

.tab {
    display: flex;
    align-items: center;
    gap: 4px;
    padding: 0 3px;
    border: 1px solid #cdcddd;
    border-width: 1px 1px 0 0;
}

.tab:first-child {
    border-left-width: 1px;
}

.tab-active {
    color: #0f7ad1;
    margin-bottom: -1px;
    background: #eeedf2;
}

.tabs button {
    color: #777;
    font: bold 11px "DejaVu Sans", sans-serif;
}

.close-all {
    margin: 0 2px 8px auto;
}

/* filtros */
.filters {
    display: flex;
    height: 51px;
    margin-top: 1px;
    padding-right: 1px;
    align-items: center;
    border: 1px solid #cdcddd;
    border-right: none;
}

.conta {
    width: 226px;
    margin: 0 15px 0 14px;
    padding: 4px 9px 0 11px;
}

.conta legend {
    margin-left: -4px;
}

.conta select {
    display: block;
    width: 100%;
    height: 19px;
    padding: 0 2px;
    appearance: none;
    border: 1px solid #d3d3e0;
    background-color: #fff;
    background-image: linear-gradient(45deg, transparent 50%, #666 50%), linear-gradient(-45deg, transparent 50%, #666 50%);
    background-image: linear-gradient(45deg, transparent 50%, #666 50%), linear-gradient(-45deg, transparent 50%, #666 50%);
    background-size: 4px 4px;
    background-position: right 9px center, right 5px center;
    background-repeat: no-repeat;
}

.round {
    display: flex;
    align-items: center;
    justify-content: center;
    width: 23px;
    height: 23px;
    margin-bottom: 2px;
    border: 1px solid #777;
    border-radius: 50%;
    background: #f6f6f8;
}

.emissao {
    width: 68px;
    padding-left: 3px;
    margin-top: 4px;
    font-style: italic;
}

.date {
    display: flex;
    align-items: center;
    width: 86px;
    height: 20px;
    padding: 0 3px 0 1px;
    background: #fff;
    border: 1px solid #d3d3e0;
}

.date input {
    flex: 1;
    min-width: 0;
    width: 0;
}

.date svg {
    width: 15px;
    height: 15px;
}

.ate {
    margin: 4px 1px 0 9px;
}

.btn {
    display: flex;
    align-items: center;
    justify-content: center;
    gap: 6px;
    height: 27px;
    overflow: hidden;
    color: #000;
    font: 10px/12px "Roboto Condensed", Roboto, sans-serif;
    border: 1px solid #6d6d6d;
    border-radius: 12px;
    background: linear-gradient(#f9f9fa, #efeff1 30%, #e5e5e7 45%, #e9e9eb 75%, #fdfdfd);
}

.buscar {
    width: 30px;
    height: 32px;
    margin: 0 5px 0 8px;
}

.importar {
    width: 127px;
    height: 32px;
    padding: 0 1px;
}

.delay {
    display: flex;
    align-items: center;
    width: 64px;
    height: 26px;
    margin: 0 10px 0 15px;
    overflow: hidden;
    background: #efefef;
}

.spin {
    display: flex;
    width: 34px;
    height: 20px;
    padding: 0 4px 0 2px;
    background: #fff;
    border: 1px solid #d3d3e0;
}

.spin input {
    width: 100%;
    min-width: 0;
}

.spin span {
    display: flex;
    flex-direction: column;
    justify-content: space-evenly;
    fill: #666;
}

.dias {
    margin: 4px 0 0 8px;
}

.right-buttons {
    display: flex;
    gap: 2px;
    margin-left: auto;
}

.right-buttons .btn {
    height: 47px;
}

.api {
    width: 115px;
    padding: 0 4px;
}

.video {
    width: 79px;
    padding: 0 4px 0 10px;
    gap: 10px;
}

.yt {
    display: flex;
    flex-direction: column;
    align-items: center;
    font: bold 12px/13px "Roboto Condensed", Roboto, sans-serif;
    color: #455a64;
}

.yt i {
    padding: 1px 2px;
    font-style: normal;
    color: #fff;
    background: #f44336;
    border-radius: 4px;
}

.split {
    gap: 0;
    padding: 0;
    width: 83px;
    align-items: stretch;
    font: 11px/14px "Open Sans", sans-serif;
}

.split button {
    display: flex;
    align-items: center;
    gap: 5px;
    padding-left: 3px;
    flex: 1;
}

.split button + button {
    flex: none;
    width: 19px;
    padding-left: 3px;
    border-left: 1px solid #333;
    font-size: 9px;
}

.split-big {
    font-weight: bold;
}

.split-big button {
    padding-left: 0;
    gap: 4px;
}

.sair {
    width: 31px;
}

/* painéis */
.panes {
    flex: 1;
    min-height: 0;
    display: grid;
    grid-template-columns: 848fr 1071fr;
}

.side {
    display: flex;
    flex-direction: column;
    min-width: 0;
    min-height: 0;
    padding-right: 1px;
}

.side-right {
    border-left: 4px solid #000;
    padding-right: 0;
}

.pane {
    flex: 1;
    min-height: 0;
    display: flex;
    flex-direction: column;
    margin: 3px 0 0 0;
    padding: 3px 2px 1px 1px;
}

.pane-a {
    flex: 447;
}

.pane-b {
    flex: 363;
    margin-top: 5px;
}

.pane-b .actions {
    height: 31px;
}

.pane > legend {
    margin: 0 0 0 6px;
    height: 16px;
    line-height: 16px;
}

.splitter {
    height: 4px;
    background: #d4d6e2;
}

.box {
    flex: 1;
    min-height: 0;
    display: flex;
    flex-direction: column;
    border: 1px solid #cdcddd;
    border-bottom: none;
}

.actions {
    display: flex;
    align-items: center;
    gap: 2px;
    height: 32px;
    padding: 0 1px 0 3px;
    flex: none;
}

.criar {
    width: 101px;
}

.baixar {
    width: 126px;
    padding: 0 1px;
    gap: 3px;
}

.cancelar {
    width: 85px;
    gap: 8px;
}

.exibir {
    display: flex;
    align-items: center;
    gap: 7px;
    margin-left: 10px;
    width: 68px;
    font: 10px/12px "Roboto Condensed", Roboto, sans-serif;
}

input[type="checkbox"] {
    appearance: none;
    flex: none;
    width: 13px;
    height: 13px;
    background: #fff;
    border: 1px solid #d3d3e0;
}

.push {
    margin-left: auto;
}

.imprimir {
    width: 31px;
}

.acao {
    width: 114px;
}

.acao + .acao {
    gap: 9px;
}

.searchbar {
    flex: none;
    height: 37px;
    padding: 6px 7px;
    background: #9f9f9f;
}

.search {
    display: flex;
    width: 210px;
    height: 24px;
    padding: 1px;
    background: #fff;
    font: 11px/14px "Liberation Sans", Arial, sans-serif;
}

.search input {
    flex: 1;
    min-width: 0;
    padding-left: 3px;
}

.search input::placeholder {
    color: #5e5e5e;
    opacity: 1;
}

.search button {
    display: flex;
    align-items: center;
    justify-content: center;
    width: 17px;
    background: #f0f0f0;
    border: 1px solid #f7f7f7;
    border-right-color: #8a8a8a;
    border-bottom-color: #8a8a8a;
}

/* tabelas */
.grid-area {
    flex: 1;
    min-height: 0;
    overflow: hidden;
    background: #fff;
    border-left: 1px solid #9f9f9f;
}

.grid {
    width: 100%;
    table-layout: fixed;
    border-collapse: separate;
    border-spacing: 0;
    font: 11px/14px "Liberation Sans", Arial, sans-serif;
    color: #000;
}

.grid th {
    height: 18px;
    padding: 0 0 0 2px;
    overflow: hidden;
    white-space: nowrap;
    text-align: left;
    font: 11px/14px "Open Sans", sans-serif;
    background: #7fa4d0;
    border-top: 1px solid #fff;
    border-left: 1px solid #fff;
    border-bottom: 1px solid #9f9f9f;
}

.grid td {
    height: 22px;
    padding: 0 1px 0 2px;
    overflow: hidden;
    white-space: nowrap;
    border-right: 1px solid #9f9f9f;
    border-bottom: 1px solid #9f9f9f;
}

.grid td:last-child {
    border-right: none;
}

.grid td.ind {
    background: #f0f0f0;
    padding: 0;
}

.ind span {
    display: flex;
    align-items: center;
    justify-content: flex-end;
    gap: 4px;
    padding-right: 3px;
}

.grid th.ind span {
    gap: 3px;
}

.grid td.ind input {
    border: 1px solid #fff;
    border-top-color: #9f9f9f;
    border-left-color: #9f9f9f;
}

.ord svg {
    float: right;
    margin: 3px 7px 0 0;
}

.grid td.val {
    text-align: right;
    color: #0000ff;
    background: #ffffe1;
}

.grid td.neg {
    color: #ff0000;
}

.grid td.id {
    text-align: right;
}

.grid td.focus {
    outline: 1px solid #000;
    outline-offset: -2px;
}

.grid td.dotted {
    outline: 1px dotted #000;
    outline-offset: -1px;
}

.grid td.drop {
    padding-right: 0;
}

.drop span {
    display: flex;
    align-items: center;
    justify-content: space-between;
}

.drop button {
    display: flex;
    align-items: center;
    justify-content: center;
    width: 16px;
    height: 19px;
    margin-right: 1px;
    background: #f0f0f0;
    border-right: 1px solid #9f9f9f;
    border-bottom: 1px solid #9f9f9f;
}

.grid-arquivo col:nth-child(1) { width: 32px; }
.grid-arquivo col:nth-child(2) { width: 121px; }
.grid-arquivo col:nth-child(3) { width: 124px; }
.grid-arquivo col:nth-child(4) { width: 124px; }
.grid-arquivo col:nth-child(5) { width: 60px; }
.grid-arquivo col:nth-child(6) { width: 112px; }
.grid-arquivo col:nth-child(7) { width: 64px; }
.grid-arquivo col:nth-child(8) { width: 64px; }

.grid-arquivo-conc col:nth-child(1) { width: 15px; }
.grid-arquivo-conc col:nth-child(2) { width: 125px; }
.grid-arquivo-conc col:nth-child(3) { width: 124px; }
.grid-arquivo-conc col:nth-child(4) { width: 124px; }
.grid-arquivo-conc col:nth-child(5) { width: 304px; }
.grid-arquivo-conc col:nth-child(6) { width: 112px; }

.grid-sistema col:nth-child(1) { width: 32px; }
.grid-sistema col:nth-child(2) { width: 30px; }
.grid-sistema col:nth-child(3) { width: 30px; }
.grid-sistema col:nth-child(4) { width: 133px; }
.grid-sistema col:nth-child(5) { width: 77px; }
.grid-sistema col:nth-child(6) { width: 67px; }
.grid-sistema col:nth-child(7) { width: 242px; }
.grid-sistema col:nth-child(8) { width: 54px; }
.grid-sistema col:nth-child(9) { width: 110px; }
.grid-sistema col:nth-child(10) { width: 122px; }

.grid-sistema-conc col:nth-child(1) { width: 15px; }
.grid-sistema-conc col:nth-child(2) { width: 64px; }
.grid-sistema-conc col:nth-child(3) { width: 54px; }
.grid-sistema-conc col:nth-child(4) { width: 146px; }
.grid-sistema-conc col:nth-child(5) { width: 112px; }
.grid-sistema-conc col:nth-child(6) { width: 124px; }
.grid-sistema-conc col:nth-child(7) { width: 339px; }
.grid-sistema-conc col:nth-child(8) { width: 64px; }
.grid-sistema-conc col:nth-child(9) { width: 113px; }

/* totais */
.totals {
    flex: none;
    display: flex;
    height: 22px;
    padding: 1px 0;
    background: #f0f0f0;
    font: 11px/18px "Liberation Sans", Arial, sans-serif;
    color: #000;
}

.totals output {
    padding: 0 2px;
    text-align: right;
    border: 1px solid #fff;
    border-top-color: #9f9f9f;
    border-left-color: #9f9f9f;
}

.totals-arquivo output {
    width: 64px;
    margin-left: 638px;
}

.totals-arquivo-conc output {
    width: 123px;
    margin-left: 17px;
    text-align: left;
}

.totals-sistema output {
    width: 29px;
    margin-left: 34px;
}

.totals-sistema output + output {
    width: 54px;
    margin-left: 549px;
}

.totals-sistema-conc output {
    width: 62px;
    margin-left: 17px;
}

.totals-sistema-conc output + output {
    width: 63px;
    margin-left: 776px;
}

/* barras de rolagem */
.hscroll {
    flex: none;
    display: flex;
    height: 19px;
    border-top: 1px solid #9f9f9f;
    border-bottom: 1px solid #9f9f9f;
}

.has-corner {
    padding-right: 17px;
    background: #f0f0f0;
}

.hscroll button, .vscroll button {
    display: flex;
    align-items: center;
    justify-content: center;
    width: 17px;
    background: #f0f0f0;
    border-right: 1px solid #9f9f9f;
}

.track {
    flex: 1;
    min-height: 0;
    background: #f7f7f7;
}

.thumb {
    display: block;
    height: 100%;
    background: #f0f0f0;
    border: 1px solid #fff;
    border-width: 1px 1px 0 1px;
    border-right-color: #9f9f9f;
}

.thumb-55 { width: 55%; }
.thumb-46 { width: 46%; }
.thumb-60 { width: 60%; }

.with-vscroll {
    flex: 1;
    min-height: 0;
    display: flex;
}

.grid-col {
    flex: 1;
    min-width: 0;
    display: flex;
    flex-direction: column;
}

.vscroll {
    width: 17px;
    display: flex;
    flex-direction: column;
}

.vscroll button {
    height: 17px;
    border-bottom: 1px solid #9f9f9f;
    border-top: 1px solid #fff;
}

.vscroll .thumb {
    height: 64%;
    border-bottom: 1px solid #9f9f9f;
}

/* saldo */
.saldo {
    flex: none;
    display: flex;
    align-items: flex-start;
    gap: 4px;
    padding: 2px 0 0 3px;
    height: 95px;
}

.saldo-box {
    width: 289px;
    height: 85px;
    margin-top: 6px;
}

.saldo-box legend {
    margin-left: 7px;
    white-space: nowrap;
}

.saldo-row {
    display: flex;
    align-items: center;
    height: 20px;
    margin: 8px 0 0 45px;
}

.saldo-box legend + .saldo-row {
    margin-top: 10px;
}

.saldo-row label {
    width: 114px;
    white-space: nowrap;
}

.saldo-row input {
    width: 79px;
    height: 20px;
    padding: 0 1px;
    color: #222;
    background: #7fa4d0;
    border: 1px solid #cdd3e6;
}

.extrato {
    width: 85px;
    height: 93px;
    gap: 4px;
    font: 12px/14px Roboto, sans-serif;
}

.desconciliar {
    width: 100px;
}

.consultar {
    width: 104px;
    gap: 4px;
    padding-left: 8px;
    overflow: visible;
}

.consultar span {
    width: 54px;
}

.consultar-linha {
    gap: 9px;
    padding: 0;
    justify-content: flex-start;
}

.consultar-linha span {
    width: auto;
    white-space: nowrap;
}

/* rodapé */
.statusbar {
    flex: none;
    display: flex;
    gap: 2px;
    height: 21px;
    padding-top: 1px;
    background: #f0f0f0;
    font: bold 11px/20px "Liberation Sans", Arial, sans-serif;
}

.statusbar span {
    width: 177px;
    overflow: hidden;
    white-space: nowrap;
    text-align: center;
    border: 1px solid #fff;
    border-top-color: #9f9f9f;
    border-left-color: #9f9f9f;
}

.statusbar span:nth-child(1) { width: 22px; }
.statusbar span:nth-child(5) { width: 251px; }
.statusbar span:nth-child(6) { width: 202px; }

.statusbar .last {
    flex: 1;
    text-align: right;
    padding-right: 16px;
}

.statusbar input {
    width: 119px;
    height: 17px;
    padding: 0 2px;
    font: 11px/16px "Open Sans", sans-serif;
    background: #ffffb8;
    border-bottom: 1px solid #9f9f9f;
}

.statusbar input::placeholder {
    color: #8a8a78;
    opacity: 1;
}
```
